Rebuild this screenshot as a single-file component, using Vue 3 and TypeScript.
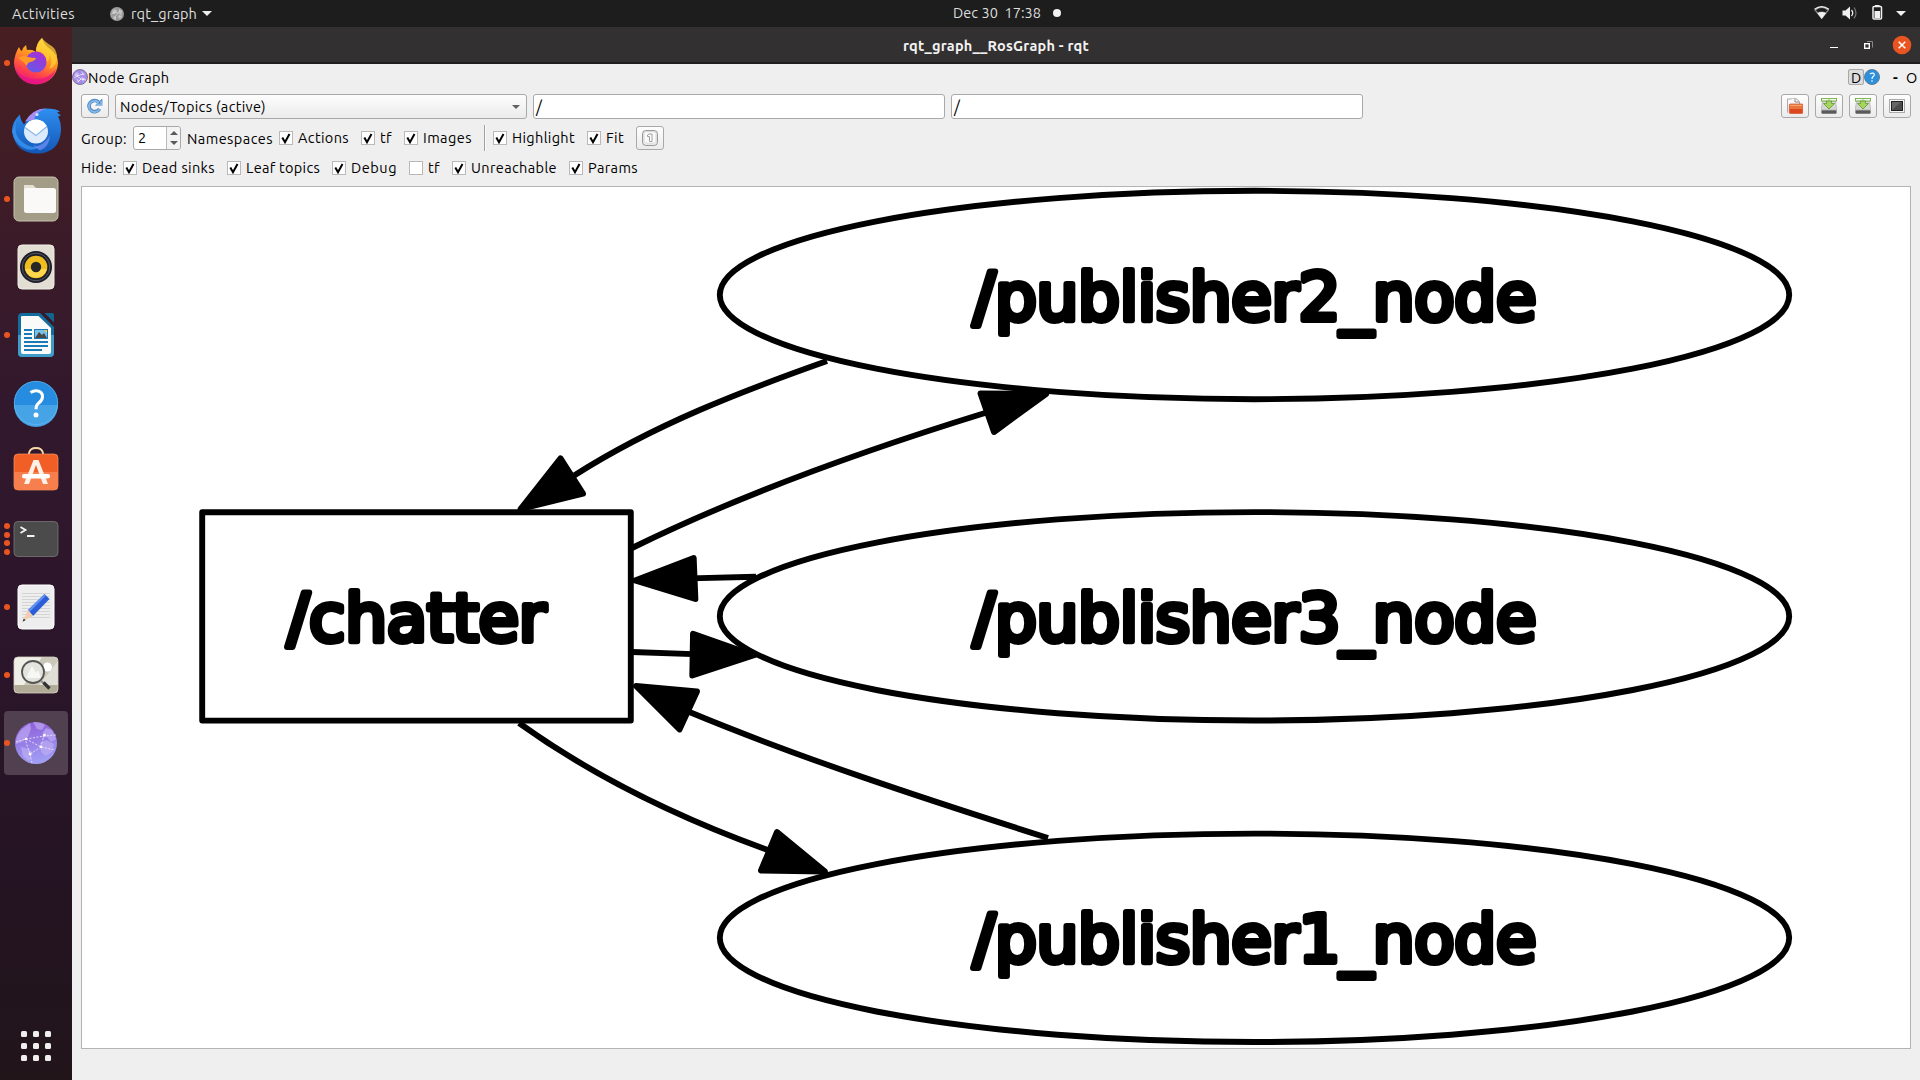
<script setup lang="ts">
interface Check { label: string; width: number; on: boolean }
interface GraphNode { label: string; cy: number }
interface Edge { line: string; head: string }

// Spreads a label's letters so that it takes the given number of pixels.
const vFit = {
  mounted(el: HTMLElement, binding: { value: number }) {
    const count = (el.textContent ?? '').length
    const natural = el.getBoundingClientRect().width
    el.style.letterSpacing = `${(binding.value - natural) / count}px`
  },
}

const clock = 'Dec 30\u00a0\u00a017:38'

const showChecks: Check[] = [
  { label: 'Actions', width: 51, on: true },
  { label: 'tf', width: 12, on: true },
  { label: 'Images', width: 49, on: true },
]
const viewChecks: Check[] = [
  { label: 'Highlight', width: 63, on: true },
  { label: 'Fit', width: 18, on: true },
]
const hideChecks: Check[] = [
  { label: 'Dead sinks', width: 73, on: true },
  { label: 'Leaf topics', width: 74, on: true },
  { label: 'Debug', width: 46, on: true },
  { label: 'tf', width: 12, on: false },
  { label: 'Unreachable', width: 86, on: true },
  { label: 'Params', width: 50, on: true },
]

const apps: { name: string; windows: number }[] = [
  { name: 'firefox', windows: 1 },
  { name: 'thunderbird', windows: 0 },
  { name: 'files', windows: 1 },
  { name: 'rhythmbox', windows: 0 },
  { name: 'writer', windows: 1 },
  { name: 'help', windows: 0 },
  { name: 'software', windows: 0 },
  { name: 'terminal', windows: 4 },
  { name: 'editor', windows: 1 },
  { name: 'viewer', windows: 1 },
  { name: 'rqt', windows: 1 },
]

const nodes: GraphNode[] = [
  { label: '/publisher2_node', cy: 295 },
  { label: '/publisher3_node', cy: 616.3 },
  { label: '/publisher1_node', cy: 937.8 },
]
const edges: Edge[] = [
  { line: 'M827 361C745 390 655 424 575 475L568 480', head: '520.5,509 560.5,458.3 583,493.7' },
  { line: 'M632 548C740 495 865 450 985 413L993 410.500', head: '1046,394 980.5,393.5 994,432' },
  { line: 'M756 576.8L690 578.4', head: '635,580.5 693.7,558 695.4,599' },
  { line: 'M632 652L700 654.4', head: '754,655.3 693,633.8 692.3,675.5' },
  { line: 'M1048 838C925 799 800 758 690 712.3L684 709.500', head: '636,686 697,691.5 679.5,729.5' },
  { line: 'M519 723C590 774 677 817 765 849L772 851.500', head: '825,871.5 777,832 761,870.5' },
]
</script>

<template>
  <div class="screen">
    <header class="topbar">
      <span class="activities" v-fit="63">Activities</span>
      <svg class="tray-globe" viewBox="0 0 14 14" width="14" height="14">
        <circle cx="7" cy="7" r="7" fill="#999" />
        <path d="M2 4l3-2 2 2-2 3-2 0zM9 2l3 2 0 3-3-1zM3 9l3 1 0 3-2-1zM9 8l3 1-2 3-2-2z" fill="#c2c2c2" />
        <path d="M1 7l5-2 6 3M4 12l3-5 3-4" stroke="#ddd" stroke-width=".6" fill="none" />
      </svg>
      <span class="appname" v-fit="66">rqt_graph</span>
      <i class="caret"></i>
      <div class="clock"><span v-fit="88">{{ clock }}</span><i></i></div>
      <svg class="status" viewBox="0 0 100 27" width="100" height="27">
        <path d="M.2 10Q7.500 3.500 15.200 10L7.700 19.200Z" fill="#8a8a8a" />
        <path d="M2 10.300Q7.700 5.800 13.400 10.300L11.300 12.600Q7.700 10.300 4.100 12.600Z" fill="#1d1d1d" />
        <path d="M.5 9.300Q7.700 4 14.900 9.300" fill="none" stroke="#f0f0f0" stroke-width="1.300" />
        <path d="M3.300 13Q7.700 10.800 12.100 13L7.700 19Z" fill="#f0f0f0" />
        <path d="M28.500 10.500h3l4.500-4v13l-4.500-4h-3z" fill="#f0f0f0" />
        <path d="M37.500 10Q40 13 37.500 16" fill="none" stroke="#f0f0f0" stroke-width="1.300" />
        <path d="M40 7.500Q44 13 40 18.500" fill="none" stroke="#777" stroke-width="1.200" />
        <rect x="59" y="6.500" width="8.500" height="12.500" rx="1" fill="none" stroke="#f0f0f0" stroke-width="1.500" />
        <rect x="61" y="5" width="4.500" height="2" fill="#f0f0f0" />
        <rect x="60.500" y="11" width="5.600" height="7" fill="#f0f0f0" />
        <path d="M82 11h10l-5 5z" fill="#f0f0f0" />
      </svg>
    </header>

    <div class="body">
      <nav class="dock">
        <div v-for="app in apps" :key="app.name" class="app" :class="{ active: app.name === 'rqt' }">
          <div class="dots"><i v-for="n in app.windows" :key="n"></i></div>
          <svg viewBox="0 0 64 64" width="64" height="64">
            <defs>
              <linearGradient id="ff" x1=".7" y1="0" x2=".3" y2="1"><stop offset="0" stop-color="#ffe94a" /><stop offset=".4" stop-color="#ff9a1f" /><stop offset=".75" stop-color="#ff3f4d" /><stop offset="1" stop-color="#e3108c" /></linearGradient>
              <linearGradient id="fp" x1="0" y1="1" x2=".6" y2="0"><stop offset="0" stop-color="#5a5fe8" /><stop offset="1" stop-color="#a631d6" /></linearGradient>
              <linearGradient id="tb" x1="0" y1="0" x2="0" y2="1"><stop offset="0" stop-color="#2f8ff0" /><stop offset="1" stop-color="#1257b8" /></linearGradient>
              <linearGradient id="gl" x1=".4" y1="0" x2=".6" y2="1"><stop offset="0" stop-color="#8f5fda" /><stop offset="1" stop-color="#a1a2f5" /></linearGradient>
            </defs>
            <g v-if="app.name === 'firefox'">
              <path d="M10 31Q11 22 15 16q1 3 3 4 1-4 4-6l1 5q5-1 9 2 0-9 6-14 2 7 8 11 8 6 8 14A22 22 0 0 1 10 31z" fill="url(#ff)" />
              <circle cx="32" cy="31" r="10.500" fill="url(#fp)" />
              <path d="M14 27q5-3 10-1 4 1 8 1-1 3-6 4-3 1-3 4-4-5-9-8z" fill="#ff9a26" />
              <path d="M32 20q4-1 8 3 3 4 3 8 3-3 2-8 5 8 0 15 9-3 8-14-2-8-7-10-6-4-8-7-6 6-6 13z" fill="#ffcf36" opacity=".75" />
              <path d="M11 37q6 11 20 11 14 0 21-10-4 14-20 15-15-1-21-16z" fill="#e3108c" opacity=".65" />
            </g>
            <g v-else-if="app.name === 'thunderbird'" transform="translate(0 1.500)">
              <path d="M8 30q0-9 8-16 0 5 4 10l7-9q5-7 15-7 10 0 14 3l-3 1 4 3-3 1q3 5 3 14-2 23-24 23T8 30z" fill="url(#tb)" />
              <path d="M13 18q-5 16 6 24 8 6 17 4-8 6-17 1-9-5-11-16z" fill="#3f9df5" opacity=".7" />
              <path d="M21 21q8-13 21-13-10 3-12 11z" fill="#a68cf2" />
              <circle cx="32" cy="31" r="12" fill="#dceafb" />
              <path d="M21 27l11 8 11-9q-4-7-11-7-8 0-11 8z" fill="#fff" />
              <path d="M21 27l11 8 11-9" stroke="#8cb9e8" fill="none" stroke-width="1.200" />
              <path d="M25 42q5 5 10 3 7-3 11-10-1 12-10 15z" fill="#6c8cf0" opacity=".8" />
              <circle cx="33" cy="14" r="1.500" fill="#cfe6ff" />
            </g>
            <g v-else-if="app.name === 'files'">
              <rect x="10" y="10" width="44" height="44" rx="5" fill="#a39c86" stroke="#c7c2b0" />
              <path d="M20 18h9l3 3h9v9H20z" fill="#e4e0d4" />
              <rect x="20" y="21" width="32" height="25" rx="2.500" fill="#faf9f7" />
            </g>
            <g v-else-if="app.name === 'rhythmbox'">
              <rect x="14" y="10" width="36" height="44" rx="4" fill="#e2ded3" stroke="#f1eee6" />
              <circle cx="32" cy="32" r="16" fill="#1e1f2b" /><circle cx="32" cy="32" r="13.800" fill="none" stroke="#55565f" />
              <circle cx="32" cy="32" r="11.300" fill="#efbd20" /><path d="M21 34a11.300 11.300 0 0 0 22 0z" fill="#ffd64c" />
              <circle cx="32" cy="32" r="5.200" fill="#262626" />
            </g>
            <g v-else-if="app.name === 'writer'">
              <path d="M18 10h18l14 14v26q0 4-4 4H18q-4 0-4-4V14q0-4 4-4z" fill="#146c9c" />
              <path d="M14 32h36v18q0 4-4 4H18q-4 0-4-4z" fill="#3f9cc9" />
              <path d="M40.500 10H48q2 0 2 2v7.500z" fill="#12658f" />
              <path d="M18 13h16.500l12.500 12v24q0 2-2 2H19q-2 0-2-2V14q0-1 1-1z" fill="#fafafa" />
              <path d="M20 27h8M20 31h8M20 35h8M20 39h24M20 43h24M20 47h18" stroke="#197bb5" stroke-width="1.800" />
              <rect x="30" y="26" width="14" height="10" fill="#197bb5" /><rect x="31" y="27" width="12" height="8" fill="#79c1ea" />
              <path d="M31 35l4-6 3 3 2-2 3 5z" fill="#474747" /><path d="M40 27h3v3z" fill="#ffc933" />
            </g>
            <g v-else-if="app.name === 'help'">
              <circle cx="32" cy="32" r="22" fill="#258cdf" /><path d="M10 34a22 22 0 0 0 44 0z" fill="#46a3e6" />
              <circle cx="32" cy="32" r="21.700" fill="none" stroke="#65b7f0" stroke-width=".7" />
              <path d="M26.500 21.500q3-2 6-1.800 6 .5 6 6 0 3.500-4 6.500-2.500 2-2.500 6" fill="none" stroke="#fff" stroke-width="3" />
              <circle cx="32" cy="44" r="2.500" fill="#fff" />
            </g>
            <g v-else-if="app.name === 'software'">
              <path d="M25 17v-3q1-5 7-5t7 5v3" fill="none" stroke="#f6d9a5" stroke-width="1.800" />
              <rect x="10" y="15" width="44" height="36" rx="4" fill="#f15f27" stroke="#fa9665" stroke-width=".7" />
              <path d="M10 33h44v14q0 4-4 4H14q-4 0-4-4z" fill="#f67f4d" />
              <path d="M29.500 21h5L44 45h-5l-7-19-7 19h-5z" fill="#fff1e8" /><rect x="18" y="35" width="28" height="4.500" rx="2.200" fill="#fff" />
            </g>
            <g v-else-if="app.name === 'terminal'">
              <rect x="10" y="14.500" width="44" height="35" rx="4" fill="#4b4b4b" stroke="#777" stroke-width=".8" />
              <path d="M16.500 20l5 3-5 3M23 29h7.500" fill="none" stroke="#f4f4f4" stroke-width="1.800" />
            </g>
            <g v-else-if="app.name === 'editor'">
              <rect x="14" y="10" width="36" height="44" rx="4" fill="#eeeeef" stroke="#fff" />
              <path d="M18 18.500h28M18 21.500h28M18 24.500h28M18 27.500h28M18 30.500h28M18 33.500h28M18 36.500h28M18 39.500h28M18 42.500h28" stroke="#cdcdcd" stroke-width=".8" />
              <path d="M24 35l16.500-16 5 5L29 41z" fill="#2c5ed8" /><path d="M24 35l16.500-16 1.500 1.500L25.500 37z" fill="#6190f2" />
              <path d="M24 35l-5.500 11.500L29 41z" fill="#f2ceb0" /><path d="M19.800 43.500l-1.300 3.300 3-1.600z" fill="#333" />
            </g>
            <g v-else-if="app.name === 'viewer'">
              <rect x="10" y="14" width="44" height="36" rx="4" fill="#efefe8" />
              <path d="M38 14h12q4 0 4 4v24H20z" fill="#cbc7b9" /><path d="M54 18v24H35z" fill="#e0dfd7" />
              <path d="M10 42h44v4q0 4-4 4H14q-4 0-4-4z" fill="#b2ab97" />
              <rect x="10" y="14" width="44" height="36" rx="4" fill="none" stroke="#d4d0c3" stroke-width=".8" />
              <circle cx="43.500" cy="24" r="4.500" fill="#fff" />
              <circle cx="29" cy="29" r="11" fill="#e4e4de" stroke="#555" stroke-width="1.800" /><path d="M22 35l6-12 4 7 2-3 3 8z" fill="#fff" opacity=".7" />
              <path d="M37 38l2.500 2" stroke="#888" stroke-width="2" /><path d="M39.500 39.500l6 6" stroke="#333" stroke-width="3.200" />
            </g>
            <g v-else>
              <circle cx="32" cy="32" r="21" fill="url(#gl)" />
              <path d="M18 18l8-6 1 6-3 8-6 5-6 2q0-9 6-15zM29 11q8 0 12 3l-3 5-5-1zM42 17l6 2 4 9-5 3-4-5-5 1 1-6zM36 32l6-3 8 4-2 8-6 4-5-4zM17 36l8 2 4 4-4 8-6-5z" fill="#c3b2f3" opacity=".6" />
              <path d="M12 31l10-3 18-3 12-1M22 28l15 8 14 3M37 36L26 43l-5-15M37 36l3-12M26 43l2 9" fill="none" stroke="#f5efff" stroke-width=".8" stroke-dasharray="2 1.500" />
              <g fill="#fff"><circle cx="22" cy="28" r="1.200" /><circle cx="40.500" cy="24" r="1.300" /><circle cx="37" cy="36" r="1.300" /><circle cx="26" cy="43" r="1.300" /></g>
            </g>
          </svg>
        </div>
        <div class="grid-button"><i v-for="n in 9" :key="n"></i></div>
      </nav>

      <main class="window">
        <div class="titlebar">
          <b v-fit="186">rqt_graph__RosGraph - rqt</b>
          <svg viewBox="0 0 90 36" width="90" height="36">
            <path d="M4 20.500h8" stroke="#fff" stroke-width="1" />
            <path d="M41 14.500h5.500v6M40 15" fill="none" stroke="#888" />
            <rect x="38.700" y="16.700" width="4.600" height="4.600" fill="none" stroke="#fff" stroke-width="1.400" />
            <circle cx="76" cy="18" r="9.300" fill="#e95420" /><path d="M72.700 14.700l6.600 6.600M79.300 14.700l-6.600 6.600" stroke="#fff" stroke-width="1.500" />
          </svg>
        </div>

        <div class="dock-title">
          <svg viewBox="0 0 16 16" width="16" height="16">
            <circle cx="8" cy="8" r="7.500" fill="#a48be4" stroke="#7d7499" />
            <path d="M2 6l3-3 2 2-2 3zM9 2l4 3-2 2zM9 8l4 1-2 4zM4 9l3 2-1 3z" fill="#cdbff5" /><path d="M2 9l3-2 6-2M5 7l4 3 5 1M9 10l-3 3" stroke="#fff" stroke-width=".7" fill="none" />
          </svg>
          <span class="name" v-fit="81.500">Node Graph</span>
          <span class="d-button">D</span>
          <svg class="q" viewBox="0 0 16 16" width="16" height="16">
            <circle cx="8" cy="8" r="7.500" fill="#2b8fdc" stroke="#5d7f9b" /><path d="M5.800 4.700q4.500-1.500 4.500 1 0 1-1.400 2-.9.700-.9 2.200" fill="none" stroke="#fff" stroke-width="1.200" /><rect x="7.300" y="11.300" width="1.400" height="1.400" fill="#fff" />
          </svg>
          <b class="dash">-</b><span class="float">O</span>
        </div>

        <div class="tools">
          <span class="btn">
            <svg viewBox="0 0 16 16" width="16" height="16">
              <path d="M12.500 10.800A5.600 5.600 0 1 1 11.500 4" fill="none" stroke="#4a86c0" stroke-width="3.600" />
              <path d="M8 7.600h7.300V.6z" fill="#4a86c0" />
              <path d="M12.300 11.300A5.600 5.600 0 1 1 11 4l-.8 2.600h4.100V3" fill="none" stroke="#86b6e4" stroke-width="1.900" />
            </svg>
          </span>
          <span class="combo"><span v-fit="146">Nodes/Topics (active)</span><i></i></span>
          <span class="field">/</span>
          <span class="field">/</span>
          <div class="right">
            <span class="btn">
              <svg viewBox="0 0 16 16" width="16" height="16">
                <path d="M.5 14.500V1h4l1-1h3l4 3.500V7" fill="#f8f8f8" stroke="#aaa" /><path d="M8 .5v3.500h4" fill="none" stroke="#888" />
                <rect x="2.300" y="6" width="13.500" height="9.500" rx="1" fill="#e9763d" stroke="#ce4a22" stroke-width=".7" /><rect x="2.700" y="11" width="12.700" height="4" fill="#dc4720" /><path d="M3 7.300h12" stroke="#f6b083" />
              </svg>
            </span>
            <span v-for="n in 2" :key="n" class="btn">
              <svg viewBox="0 0 16 16" width="16" height="16">
                <path d="M1.500 3h13l1.300 9H.2z" fill="#d5d5d3" stroke="#aaa" stroke-width=".6" />
                <rect x=".4" y="12" width="15.200" height="3.700" rx="1" fill="#5a5b59" /><path d="M1 12.500h14" stroke="#888" stroke-width=".8" />
                <rect x=".4" y=".4" width="15.200" height="2.600" fill="#f6faf0" stroke="#6faa39" stroke-width=".9" />
                <path d="M5.500 3h5v2.500h3L8 11 2.500 5.500h3z" fill="#a7d45c" stroke="#5f9a31" stroke-width=".8" /><path d="M8 .8v1.800" stroke="#8cbf5c" stroke-width=".8" />
              </svg>
            </span>
            <span class="btn">
              <svg viewBox="0 0 16 16" width="16" height="16">
                <rect x=".5" y="1.500" width="15" height="13" fill="#f6f6f6" stroke="#aaa" /><rect x="2.500" y="3.500" width="11" height="9" fill="#4b4b4b" stroke="#222" /><path d="M3 12l9-8H3z" fill="#666" />
              </svg>
            </span>
          </div>
        </div>

        <div class="options">
          <span class="lead" v-fit="46">Group:</span>
          <span class="spin"><span>2</span><span class="steps"><i class="up"></i><i class="down"></i></span></span>
          <span class="ns" v-fit="86">Namespaces</span>
          <div class="checks">
            <label v-for="c in showChecks" :key="c.label">
              <i class="box"><svg v-if="c.on" viewBox="0 0 14 14" width="14" height="14"><path d="M3.300 6.500L6 11.300 10.500 3" /></svg></i><span v-fit="c.width">{{ c.label }}</span>
            </label>
          </div>
          <i class="rule"></i>
          <div class="checks">
            <label v-for="c in viewChecks" :key="c.label">
              <i class="box"><svg v-if="c.on" viewBox="0 0 14 14" width="14" height="14"><path d="M3.300 6.500L6 11.300 10.500 3" /></svg></i><span v-fit="c.width">{{ c.label }}</span>
            </label>
          </div>
          <span class="btn fit">
            <svg viewBox="0 0 16 16" width="16" height="16">
              <rect x=".6" y=".6" width="14.800" height="14.800" rx="3" fill="#f2f2f2" stroke="#8f8f8f" /><rect x="2" y="1.700" width="12" height="11.500" rx="2" fill="#fafafa" stroke="#c8c8c8" stroke-width=".6" />
              <path d="M5.500 5l1.500-1h3v7.500H7.500V6.500h-2z" fill="#fff" stroke="#888" stroke-width=".8" />
            </svg>
          </span>
        </div>

        <div class="options hide-row">
          <span class="lead" v-fit="36">Hide:</span>
          <div class="checks">
            <label v-for="c in hideChecks" :key="c.label">
              <i class="box"><svg v-if="c.on" viewBox="0 0 14 14" width="14" height="14"><path d="M3.300 6.500L6 11.300 10.500 3" /></svg></i><span v-fit="c.width">{{ c.label }}</span>
            </label>
          </div>
        </div>

        <div class="canvas">
          <svg viewBox="82 187 1828 861" width="1828" height="861">
            <g fill="none" stroke="#000" stroke-width="5.900">
              <ellipse v-for="n in nodes" :key="n.label" cx="1254.500" :cy="n.cy" rx="534.700" ry="104.200" />
              <rect x="202.200" y="512.200" width="428.600" height="208.400" stroke-linejoin="round" />
              <path v-for="e in edges" :key="e.line" :d="e.line" />
            </g>
            <polygon v-for="e in edges" :key="e.head" :points="e.head" stroke="#000" stroke-width="5.900" stroke-linejoin="round" />
            <g class="labels">
              <text x="416.500" y="640.700" textLength="259">/chatter</text>
              <text v-for="n in nodes" :key="n.label" x="1254.800" :y="n.cy + 24.5" textLength="563.500">{{ n.label }}</text>
            </g>
          </svg>
        </div>
      </main>
    </div>
  </div>
</template>

<style>
html, body { margin: 0; overflow: hidden; }
</style>

<style scoped>
.screen { width: 1920px; height: 1080px; display: flex; flex-direction: column; overflow: hidden; background: #efefef; color: #000; font: 14.5px/20px Ubuntu, "Noto Sans", sans-serif; white-space: nowrap; }
.screen * { box-sizing: border-box; }
.screen i { display: block; font-style: normal; flex: none; }
.screen span, .screen svg, .screen b { flex: none; }
svg { display: block; }
.topbar { position: relative; height: 27px; flex: none; display: flex; align-items: center; background: #1d1d1d; color: #dedede; }
.activities { margin-left: 12px; }
.tray-globe { margin-left: 35px; }
.appname { margin-left: 7px; }
.caret { margin-left: 5px; border: 5px solid transparent; border-top: 5px solid #eee; border-bottom: 0; }
.clock { position: absolute; left: 953px; top: 3px; display: flex; align-items: center; }
.clock i { width: 8px; height: 8px; margin-left: 12px; border-radius: 50%; background: #f2f2f2; }
.status { margin-left: auto; margin-right: 6px; }
.body { flex: 1; display: flex; min-height: 0; }
.dock { width: 72px; flex: none; display: flex; flex-direction: column; align-items: center; gap: 4px; padding: 4px 0 19px; background: linear-gradient(#481f22 0, #3a1b29 22%, #32182d 36%, #2b152a 60%, #251424 78%, #21151a 100%); }
.app { position: relative; width: 64px; height: 64px; flex: none; border-radius: 4px; }
.app.active { background: #51404f; }
.dots { position: absolute; left: 0; top: 0; height: 64px; display: flex; flex-direction: column; justify-content: center; gap: 2.7px; }
.dots i { width: 6px; height: 6px; border-radius: 50%; background: #e95420; }
.grid-button { margin-top: auto; display: grid; grid-template-columns: repeat(3, 6px); gap: 6px; }
.grid-button i { width: 6px; height: 6px; border-radius: 1.5px; background: #f1eeee; }
.window { flex: 1; display: flex; flex-direction: column; min-width: 0; }
.titlebar { height: 37px; flex: none; display: flex; align-items: center; background: #333031; border-bottom: 2px solid #201d1e; color: #f2f2f2; padding-left: 831px; }
.titlebar b { padding-top: 2px; }
.titlebar svg { margin-left: auto; margin-right: 4px; }
.dock-title { height: 26px; flex: none; display: flex; align-items: center; overflow: hidden; }
.dock-title .name, .dock-title .float, .dock-title .dash { padding-top: 2px; }
.d-button { margin-left: auto; width: 16px; height: 16px; border: 1px solid #a8a8a8; border-radius: 2px; background: #dcdcdc; line-height: 16px; text-align: center; }
.dash { margin-left: 13px; width: 13px; }
.float { width: 14px; }
.tools { height: 29px; flex: none; display: flex; align-items: flex-start; gap: 6px; padding: 4px 9px 0; }
.btn { width: 28px; height: 24px; display: flex; align-items: center; justify-content: center; border: 1px solid #a9a9a9; border-radius: 3px; background: linear-gradient(#fefefe, #ebebeb); }
.combo { width: 412px; height: 25px; display: flex; align-items: center; padding: 0 9px 0 4px; border: 1px solid #a9a9a9; border-radius: 3px; background: linear-gradient(#fdfdfd, #ebebeb); }
.combo i { margin-left: auto; border: 4px solid transparent; border-top: 4px solid #606060; border-bottom: 0; margin-right: -3px; }
.field { width: 412px; height: 25px; padding-left: 2px; line-height: 25px; border: 1px solid #a9a9a9; border-radius: 3px; background: #fff; font-size: 16px; }
.right { margin-left: auto; display: flex; gap: 6px; }
.options { height: 38px; flex: none; display: flex; align-items: center; padding-left: 9px; }
.spin { width: 48px; height: 24px; margin-left: 6px; display: flex; align-items: center; border: 1px solid #a9a9a9; border-radius: 3px; background: #fff; padding-left: 4px; }
.steps { width: 14px; height: 22px; margin-left: auto; border-left: 1px solid #bbb; background: #f3f3f3; display: flex; flex-direction: column; align-items: center; justify-content: center; gap: 6px; border-radius: 0 3px 3px 0; }
.up, .down { border: 4px solid transparent; }
.up { border-top: 0; border-bottom: 4px solid #5a5a5a; }
.down { border-bottom: 0; border-top: 4px solid #5a5a5a; }
.lead, .ns { padding-top: 1px; }
.ns { margin-left: 6px; margin-right: 6px; }
.checks { display: flex; gap: 12px; }
.checks label { display: flex; align-items: center; gap: 5px; margin-top: -1px; }
.box { width: 14px; height: 14px; border: 1px solid #b9b9b9; background: #fff; }
.box svg { margin: -1px; }
.box path { fill: none; stroke: #000; stroke-width: 2; }
.rule { width: 2px; height: 26px; margin: 0 7px 0 12px; border-left: 1px solid #a0a0a0; border-right: 1px solid #fafafa; }
.fit { margin-left: 12px; }
.hide-row { height: 29px; padding-bottom: 7px; }
.hide-row .checks { margin-left: 6px; }
.hide-row .checks label { margin-top: 0; }
.hide-row .lead { padding-top: 0; }
.canvas { width: 1830px; height: 863px; flex: none; margin: 0 9px; border: 1px solid #b4b4b4; background: #fff; }
.labels text { font: 66px "DejaVu Sans", sans-serif; text-anchor: middle; fill: #000; stroke: #000; stroke-width: 6px; stroke-linejoin: round; }
</style>
